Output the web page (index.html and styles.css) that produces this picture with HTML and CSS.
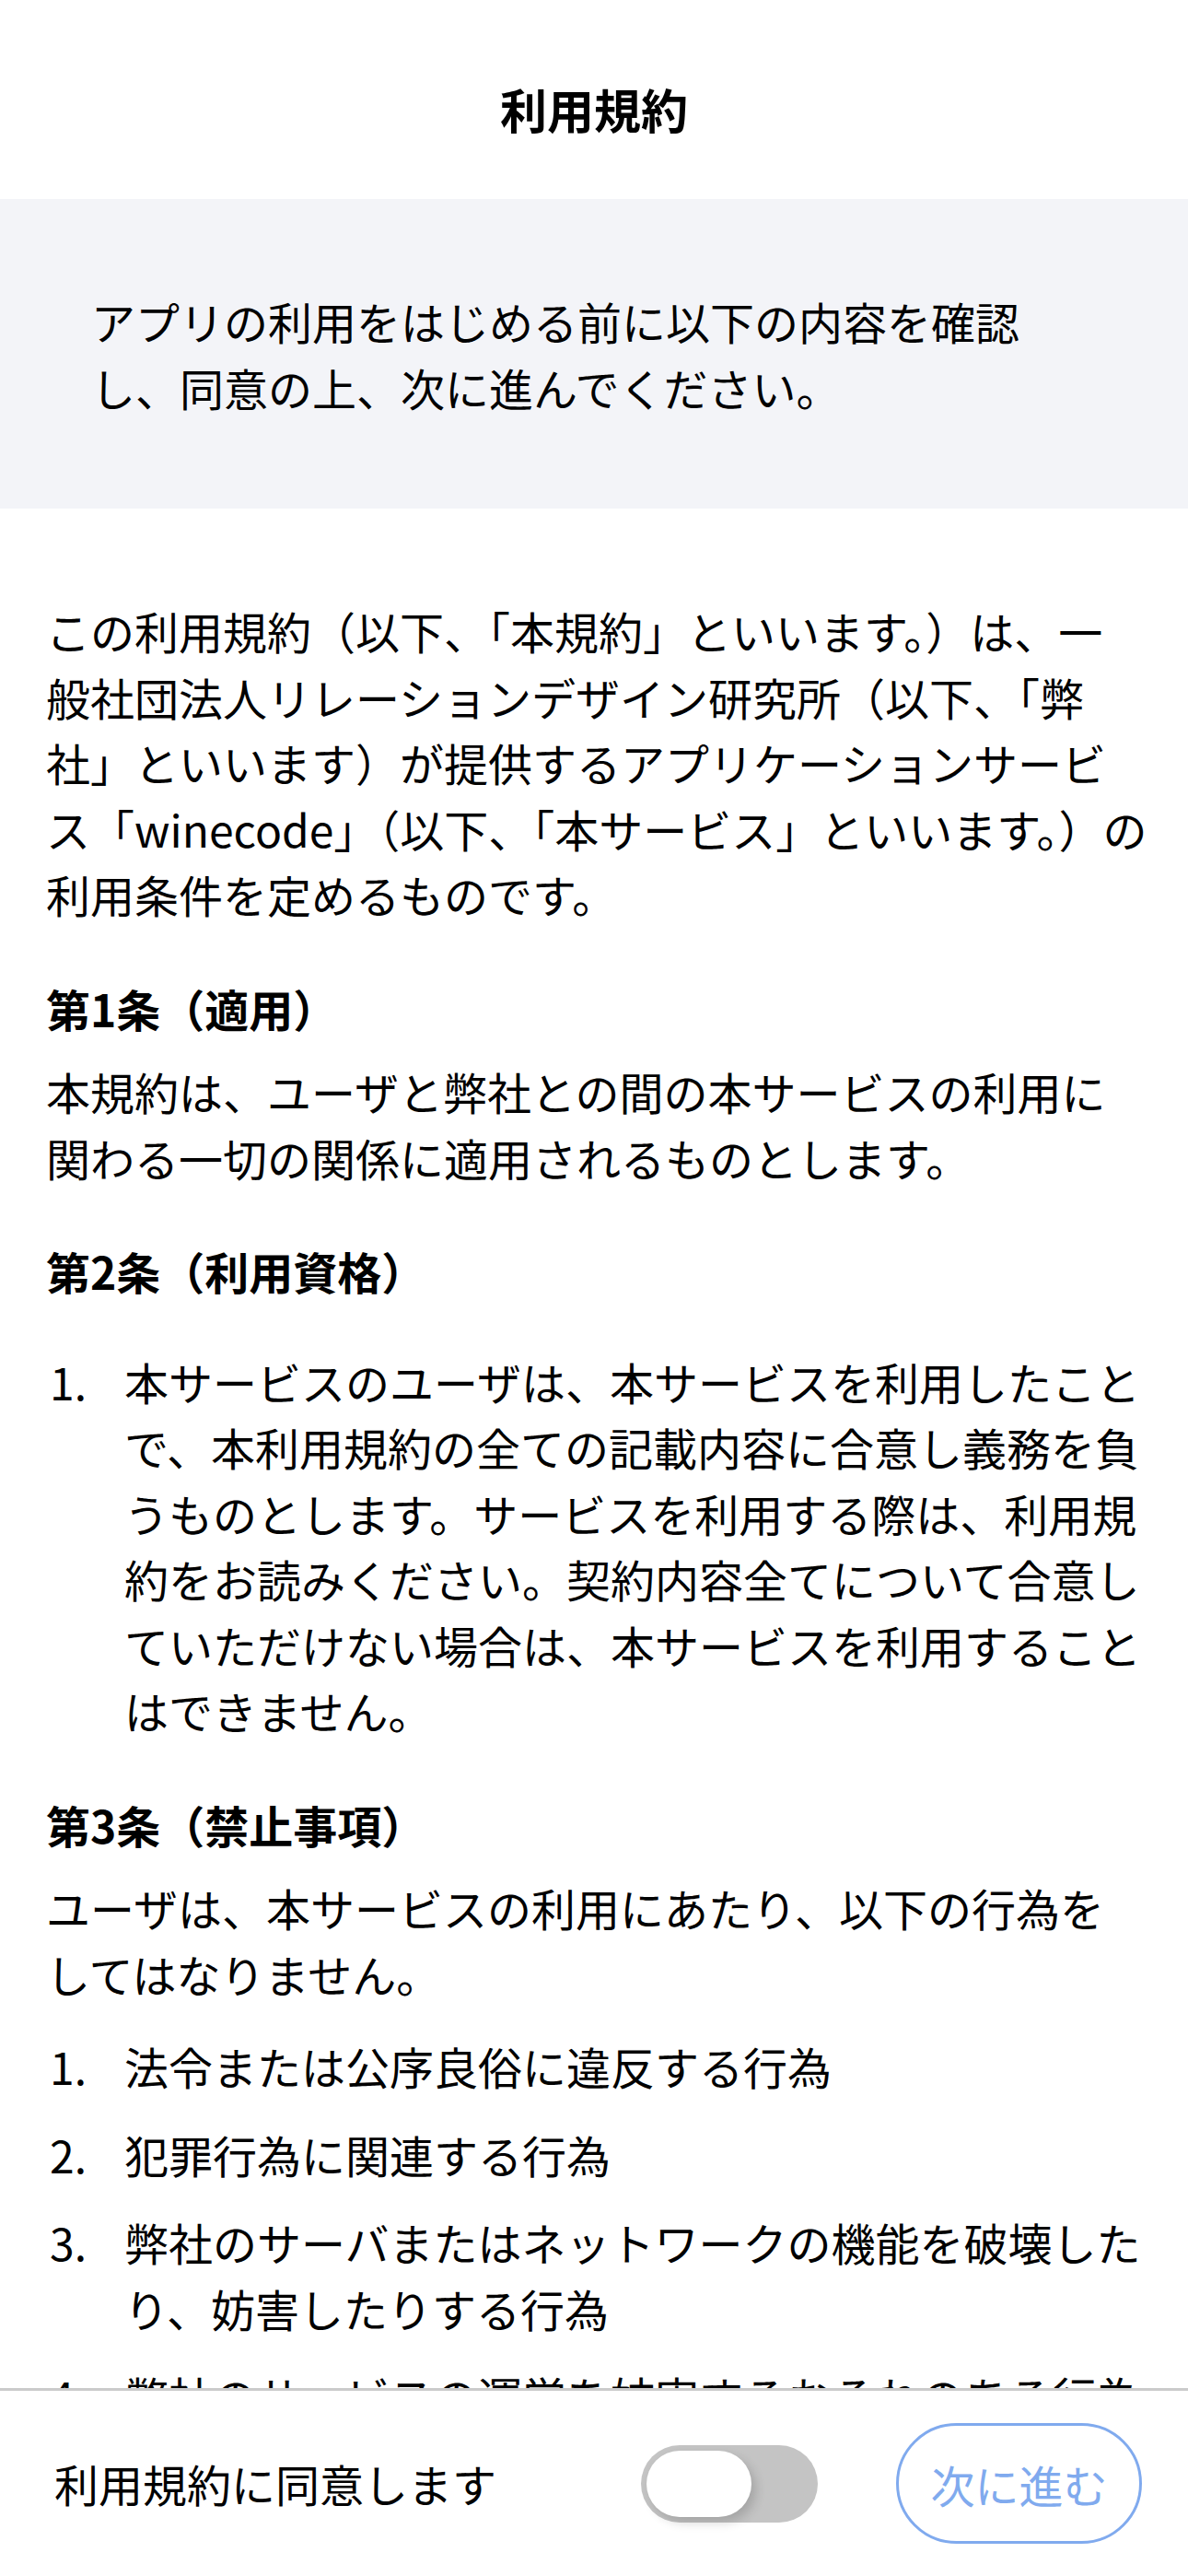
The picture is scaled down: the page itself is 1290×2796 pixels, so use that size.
FILE: index.html
```html
<!DOCTYPE html>
<html lang="ja">
<head>
<meta charset="utf-8">
<title>利用規約</title>
<link rel="stylesheet" href="styles.css">
</head>
<body>
<div class="screen">
  <header class="nav">
    <h1 class="nav-title">利用規約</h1>
  </header>
  <main class="content">
    <div class="notice">
      <p>アプリの利用をはじめる前に以下の内容を確認し、同意の上、次に進んでください。</p>
    </div>
    <div class="terms">
      <p class="intro">この利用規約（以下、「本規約」といいます。）は、一<br>般社団法人リレーションデザイン研究所（以下、「弊<br>社」といいます）が提供するアプリケーションサービ<br>ス「winecode」（以下、「本サービス」といいます。）の<br>利用条件を定めるものです。</p>
      <h2>第1条（適用）</h2>
      <p>本規約は、ユーザと弊社との間の本サービスの利用に関わる一切の関係に適用されるものとします。</p>
      <h2>第2条（利用資格）</h2>
      <ol class="list">
        <li><span class="num">1.</span><span class="txt">本サービスのユーザは、本サービスを利用したことで、本利用規約の全ての記載内容に合意し義務を負うものとします。サービスを利用する際は、利用規約をお読みください。契約内容全てについて合意していただけない場合は、本サービスを利用することはできません。</span></li>
      </ol>
      <h2>第3条（禁止事項）</h2>
      <p>ユーザは、本サービスの利用にあたり、以下の行為をしてはなりません。</p>
      <ol class="list">
        <li><span class="num">1.</span><span class="txt">法令または公序良俗に違反する行為</span></li>
        <li><span class="num">2.</span><span class="txt">犯罪行為に関連する行為</span></li>
        <li><span class="num">3.</span><span class="txt">弊社のサーバまたはネットワークの機能を破壊したり、妨害したりする行為</span></li>
        <li><span class="num">4.</span><span class="txt">弊社のサービスの運営を妨害するおそれのある行為</span></li>
      </ol>
    </div>
  </main>
  <footer class="agree-bar">
    <span class="agree-label">利用規約に同意します</span>
    <div class="switch"><span class="knob"></span></div>
    <button class="next-btn" type="button">次に進む</button>
  </footer>
</div>
</body>
</html>
```
FILE: styles.css
```css
html, body {
  margin: 0;
  padding: 0;
}

body {
  font-family: "Noto Sans CJK JP", "Noto Sans", sans-serif;
  color: #000;
  background: #fff;
}

.screen {
  height: 100vh;
  display: flex;
  flex-direction: column;
  overflow: hidden;
}

.nav {
  flex-shrink: 0;
  height: 216px;
  box-sizing: border-box;
  padding-top: 20px;
  display: flex;
  align-items: center;
  justify-content: center;
}

.nav-title {
  margin: 0;
  font-size: 51px;
  font-weight: 700;
  line-height: 1;
}

.content {
  flex: 1;
  min-height: 0;
  overflow: hidden;
}

.notice {
  background: #f3f4f8;
  padding: 96px 99px 96px 99px;
}

.notice p {
  margin: 0;
  font-size: 48px;
  line-height: 72px;
}

.terms {
  display: flex;
  flex-direction: column;
  padding: 97px 46px 0 50px;
  font-size: 48px;
  line-height: 71.5px;
}

.terms p {
  margin: 0;
}

.terms .intro {
  margin-right: -40px;
}

.terms h2 {
  margin: 52px 0 19px;
  font-size: 48px;
  font-weight: 700;
  line-height: 71.5px;
}

.list {
  list-style: none;
  margin: 29px 0 0;
  padding: 0;
  display: flex;
  flex-direction: column;
  gap: 24px;
}

.list li {
  display: grid;
  grid-template-columns: 85px 1fr;
}

.num {
  padding-left: 4px;
}

.agree-bar {
  flex-shrink: 0;
  height: 204px;
  box-sizing: border-box;
  border-top: 3px solid #cbcbcb;
  background: #fff;
  display: flex;
  align-items: center;
  padding: 0 50px 0 59px;
}

.agree-label {
  flex: 1;
  font-size: 48px;
  line-height: 1.2;
}

.switch {
  width: 192px;
  height: 84px;
  box-sizing: border-box;
  padding: 6px;
  border-radius: 42px;
  background: #c4c4c4;
  display: flex;
  margin-right: 85px;
}

.knob {
  width: 114px;
  height: 72px;
  border-radius: 36px;
  background: #fff;
  box-shadow: 5px 6px 12px rgba(0, 0, 0, 0.16);
}

.next-btn {
  width: 267px;
  height: 131px;
  box-sizing: border-box;
  border: 3px solid #80aaee;
  border-radius: 66px;
  background: #fff;
  color: #80aaee;
  font-family: inherit;
  font-size: 48px;
  padding: 0;
  line-height: 1;
}
```
